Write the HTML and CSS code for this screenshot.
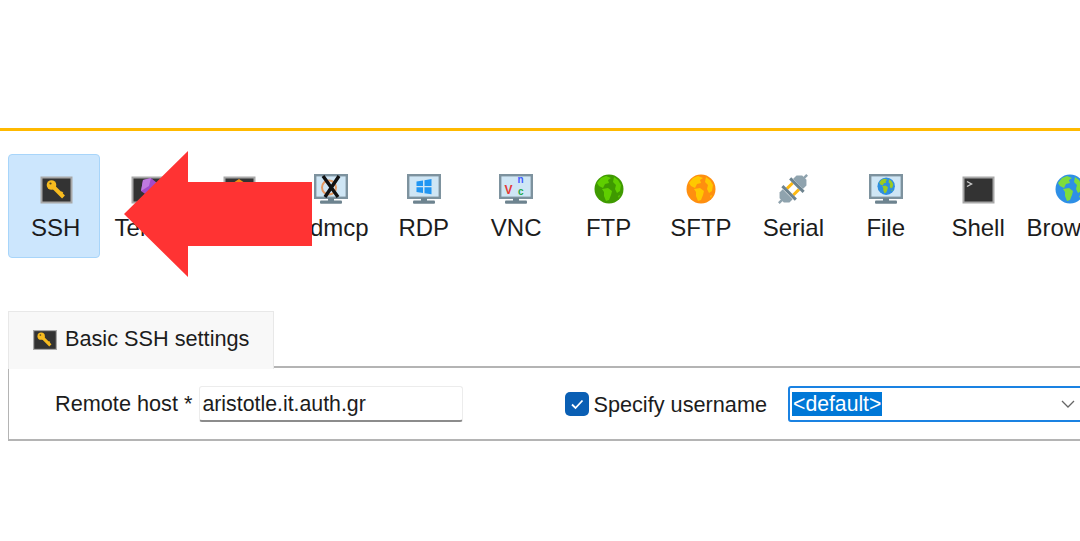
FILE: index.html
```html
<!DOCTYPE html>
<html lang="en">
<head>
<meta charset="utf-8">
<title>Session settings</title>
<link rel="stylesheet" href="styles.css">
</head>
<body>
<svg class="defs" width="0" height="0" aria-hidden="true">
  <defs>
    <g id="monitor">
      <rect x="1.2" y="1.2" width="31.6" height="22.6" fill="#cfe6f5" stroke="#7d929e" stroke-width="2.4"/>
      <rect x="14" y="24" width="6" height="3.5" fill="#6d838f"/>
      <rect x="6" y="26.5" width="22" height="3.2" rx="1" fill="#6d838f"/>
    </g>
    <g id="terminal">
      <rect x="2.5" y="3.5" width="30" height="25" fill="#333" stroke="#a8a8a8" stroke-width="2"/>
    </g>
    <g id="land">
      <path d="M7 4 12 2 17 4 14 6 15 9 11 10 9 14 5 12 3 9ZM8 15 14 14 18 17 17 21 15 26 12 27 10 22 10 18ZM20 3 24 6 27 11 26 17 23 19 21 15 22 11 19 8ZM24 22 26 21 25 24Z"/>
    </g>
    <g id="key">
      <circle cx="12.5" cy="11" r="4.8" fill="#f7bb1f"/>
      <path d="M14 12.5 24.5 23" stroke="#f7bb1f" stroke-width="4" fill="none"/>
      <path d="M21 21 23.5 18" stroke="#f7bb1f" stroke-width="2.2" fill="none"/>
      <circle cx="11.5" cy="9.5" r="1.1" fill="#5a4a20"/>
    </g>
  </defs>
</svg>

<header class="top-band"></header>

<nav class="toolbar">
  <div class="tool tool-active">
    <svg class="tool-icon" viewBox="0 0 34 30"><use href="#terminal"/><use href="#key"/></svg>
    <span>SSH</span>
  </div>
  <div class="tool">
    <svg class="tool-icon" viewBox="0 0 34 30"><use href="#terminal"/><path d="M13 6 21 4 27 9 26 18 18 22 11 17Z" fill="#a24bc9"/><path d="M13 6 21 4 19 12 11 17Z" fill="#c07ae0"/></svg>
    <span>Telnet</span>
  </div>
  <div class="tool">
    <svg class="tool-icon" viewBox="0 0 34 30"><use href="#terminal"/><path d="M17 5 23 9 22 16 12 16 11 9Z" fill="#f28c13"/></svg>
    <span>Rsh</span>
  </div>
  <div class="tool">
    <svg class="tool-icon" viewBox="0 0 34 30"><use href="#monitor"/><circle cx="15" cy="13.5" r="7" fill="none" stroke="#e59a63" stroke-width="2"/><path d="M9 2 24 23M25 2 11 23" stroke="#111" stroke-width="3.4" fill="none"/></svg>
    <span>Xdmcp</span>
  </div>
  <div class="tool">
    <svg class="tool-icon" viewBox="0 0 34 30"><use href="#monitor"/><path d="M9.5 7.5 16 6.5V12H9.5ZM17.5 6.2 24.5 5V12H17.5ZM9.5 13.3H16V19L9.5 18ZM17.5 13.3H24.5V20.3L17.5 19.2Z" fill="#2196f3"/></svg>
    <span>RDP</span>
  </div>
  <div class="tool">
    <svg class="tool-icon" viewBox="0 0 34 30"><use href="#monitor"/><text class="vnc vnc-v" x="5.5" y="20">V</text><text class="vnc vnc-n" x="18.5" y="9">n</text><text class="vnc vnc-c" x="19" y="21">c</text></svg>
    <span>VNC</span>
  </div>
  <div class="tool">
    <svg class="tool-icon" viewBox="0 0 34 30"><g transform="translate(2 0)"><circle cx="15" cy="15" r="14.5" fill="#3f9a00"/><use href="#land" fill="#5fce00"/></g></svg>
    <span>FTP</span>
  </div>
  <div class="tool">
    <svg class="tool-icon" viewBox="0 0 34 30"><g transform="translate(2 0)"><circle cx="15" cy="15" r="14.5" fill="#ff8f0f"/><use href="#land" fill="#ffc800"/></g></svg>
    <span>SFTP</span>
  </div>
  <div class="tool">
    <svg class="tool-icon" viewBox="0 0 34 30">
      <g transform="rotate(-45 17 15)">
        <path d="M13 10.5H21M13 19.5H21" stroke="#fdb913" stroke-width="3" fill="none"/>
        <rect x="10" y="5.5" width="3" height="19" fill="#6d838f"/>
        <path d="M9.5 8H5L1 12V18L5 22H9.5Z" fill="#8fa3ae"/>
        <path d="M-3 15H2" stroke="#8fa3ae" stroke-width="2.4"/>
        <rect x="21" y="5.5" width="3" height="19" fill="#6d838f"/>
        <path d="M24 8H29L33 12V18L29 22H24Z" fill="#8fa3ae"/>
        <path d="M32 15H37" stroke="#8fa3ae" stroke-width="2.4"/>
      </g>
    </svg>
    <span>Serial</span>
  </div>
  <div class="tool">
    <svg class="tool-icon" viewBox="0 0 34 30"><use href="#monitor"/><g transform="translate(8.5 3.5) scale(.58)"><circle cx="15" cy="15" r="15" fill="#2e8fe0"/><use href="#land" fill="#9ccb1f"/></g></svg>
    <span>File</span>
  </div>
  <div class="tool">
    <svg class="tool-icon" viewBox="0 0 34 30"><use href="#terminal"/><path d="M6 7.5 10.5 10 6 12.5" stroke="#ccc" stroke-width="1.4" fill="none"/></svg>
    <span>Shell</span>
  </div>
  <div class="tool">
    <svg class="tool-icon" viewBox="0 0 34 30"><g transform="translate(2 0)"><circle cx="15" cy="15" r="14.5" fill="#2e8fe6"/><use href="#land" fill="#7ddc3c"/></g></svg>
    <span>Browser</span>
  </div>
</nav>

<section class="settings">
  <div class="tab">
    <svg class="tab-icon" viewBox="2 3 31 26"><use href="#terminal"/><use href="#key"/></svg>
    <span>Basic SSH settings</span>
  </div>
  <div class="panel">
    <span class="host-label">Remote host *</span>
    <div class="host-input">aristotle.it.auth.gr</div>
    <span class="checkbox">
      <svg viewBox="0 0 24 24" width="24" height="24"><path d="M7 12.5 10.5 16 17.5 8.5" stroke="#fff" stroke-width="1.8" fill="none"/></svg>
    </span>
    <span class="user-label">Specify username</span>
    <div class="combo">
      <span class="combo-value">&lt;default&gt;</span>
      <svg class="chevron" viewBox="0 0 14 8" width="14" height="8"><path d="M1 1 7 7 13 1" stroke="#666" stroke-width="1.3" fill="none"/></svg>
    </div>
  </div>
</section>

<svg class="arrow" viewBox="0 0 188 126" width="188" height="126" aria-hidden="true"><path d="M0 63 64 0V31H188V95H64V126Z" fill="#ff3333"/></svg>
</body>
</html>
```

FILE: styles.css
```css
* { box-sizing: border-box; }

html, body { height: 100%; }

body {
  margin: 0;
  position: relative;
  overflow: hidden;
  background: #fff;
  color: #1c1c1c;
  font-family: "Liberation Sans", Arial, sans-serif;
  font-size: 21.7px;
}

.defs { position: absolute; }

.top-band {
  height: 131px;
  border-bottom: 3px solid #ffb900;
}

.toolbar {
  display: flex;
  padding: 23px 0 0 8px;
  width: 1200px;
  font-size: 24px;
}

.tool {
  flex: 0 0 92.4px;
  height: 104px;
  display: flex;
  flex-direction: column;
  align-items: center;
  padding-top: 19px;
  border: 1px solid transparent;
  border-radius: 4px;
}

.tool-active {
  padding-left: 3px;
  background: #cce6fd;
  border-color: #a8d5fa;
}

.tool-icon {
  width: 34px;
  height: 30px;
  flex: none;
}

.tool span {
  margin-top: 11px;
  line-height: 26px;
  white-space: nowrap;
}

.vnc {
  font-family: "Liberation Sans", Arial, sans-serif;
  font-size: 10px;
  font-weight: 700;
}
.vnc-v { fill: #e53935; font-size: 12px; }
.vnc-n { fill: #3d5afe; }
.vnc-c { fill: #1fa84a; }

.settings {
  margin: 53px 0 0 8px;
}

.tab {
  position: relative;
  z-index: 1;
  width: 266px;
  height: 58px;
  margin-bottom: -3px;
  display: flex;
  align-items: flex-start;
  gap: 8px;
  padding: 14px 0 0 24px;
  background: #f8f8f8;
  border: 1px solid #e8e8e8;
  border-bottom: 0;
  line-height: 26px;
}

.tab-icon {
  width: 24px;
  height: 20px;
  margin-top: 4px;
}

.panel {
  height: 75px;
  display: flex;
  align-items: center;
  border: 2px solid #b4b4b4;
  border-width: 2px 0 2px 1px;
  white-space: nowrap;
}

.host-label { margin-left: 46px; }

.host-input {
  flex: none;
  width: 264px;
  height: 36px;
  margin-left: 7px;
  padding-left: 2px;
  font-size: 21.3px;
  line-height: 34px;
  background: #fff;
  border: 1px solid #ececec;
  border-bottom: 2px solid #8c8c8c;
  border-radius: 3px;
}

.checkbox {
  flex: none;
  width: 24px;
  height: 24px;
  margin-left: 102px;
  background: #0a5fb4;
  border-radius: 5px;
}

.user-label {
  margin: 2px 0 0 4px;
}

.combo {
  flex: none;
  position: relative;
  width: 320px;
  height: 36px;
  margin-left: 21px;
  padding: 3px 0 0 2px;
  border: 2px solid #1a82e2;
  border-radius: 3px;
  background: #fff;
}

.combo-value {
  display: inline-block;
  height: 24px;
  padding: 0 1px;
  font-size: 21.2px;
  line-height: 24px;
  background: #0078d7;
  color: #fff;
}

.chevron {
  position: absolute;
  left: 271px;
  top: 12px;
}

.arrow {
  position: absolute;
  left: 124px;
  top: 151px;
}
```
